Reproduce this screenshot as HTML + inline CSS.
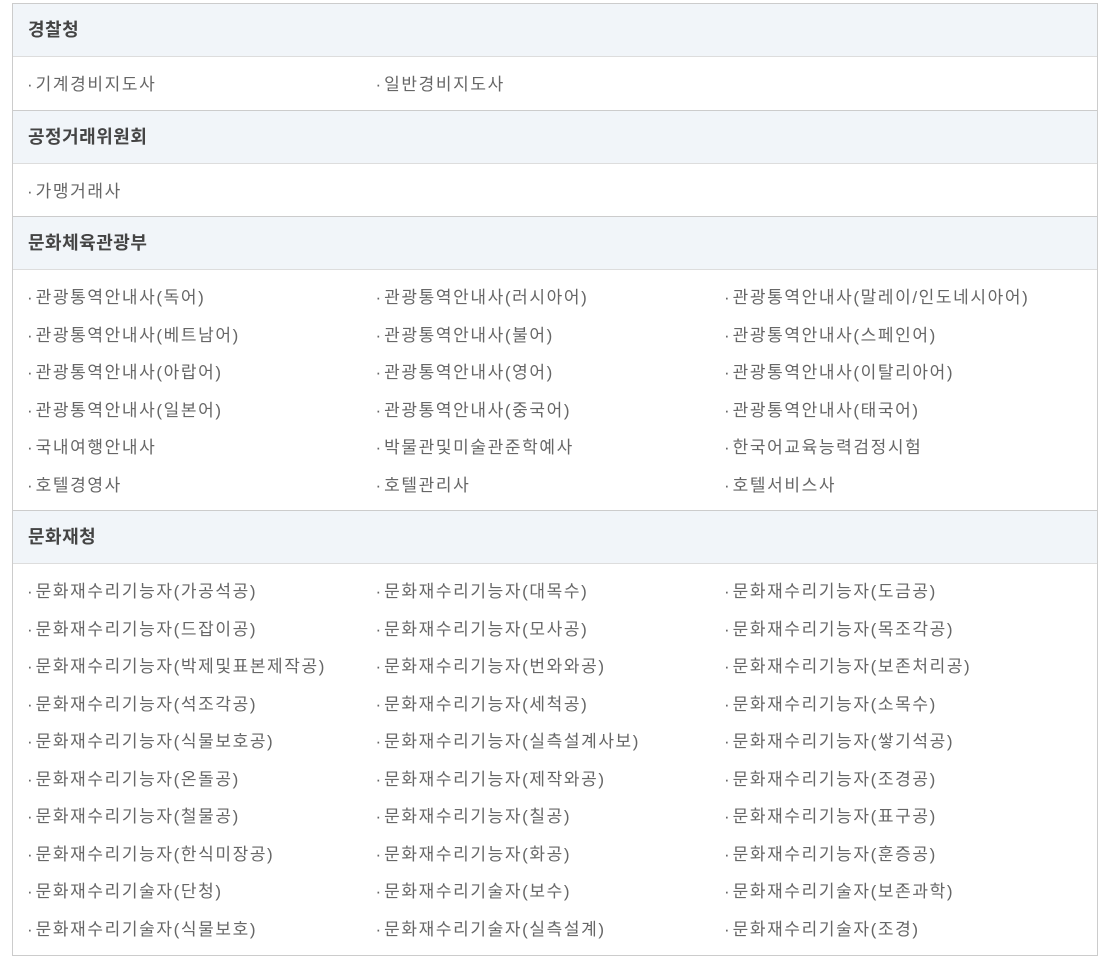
<!DOCTYPE html>
<html><head><meta charset="utf-8"><style>
body{margin:0;background:#fff;font-family:"Liberation Sans","Noto Sans CJK KR",sans-serif;}
.box{position:absolute;left:12px;top:3px;width:1084px;border:1px solid #ccc;}
.h{height:52px;line-height:52px;background:#f1f5f9;border-bottom:1px solid #ddd;padding-left:15px;font-size:18px;font-weight:bold;color:#444;letter-spacing:0.5px;}
.c{padding:9px 0 6px 14px;border-bottom:1px solid #ccc;overflow:hidden;}
.box .c:last-child{border-bottom:none;padding-bottom:7px;}
.c span{float:left;width:348.5px;height:37.5px;line-height:37.5px;font-size:17px;color:#666;white-space:nowrap;letter-spacing:1.6px;}
.c span b{font-weight:normal;letter-spacing:3px;}
</style></head><body>
<div class="box">
<div class="h">경찰청</div>
<div class="c"><span><b>·</b>기계경비지도사</span><span><b>·</b>일반경비지도사</span></div>
<div class="h">공정거래위원회</div>
<div class="c"><span><b>·</b>가맹거래사</span></div>
<div class="h">문화체육관광부</div>
<div class="c">
<span><b>·</b>관광통역안내사(독어)</span><span><b>·</b>관광통역안내사(러시아어)</span><span><b>·</b>관광통역안내사(말레이/인도네시아어)</span>
<span><b>·</b>관광통역안내사(베트남어)</span><span><b>·</b>관광통역안내사(불어)</span><span><b>·</b>관광통역안내사(스페인어)</span>
<span><b>·</b>관광통역안내사(아랍어)</span><span><b>·</b>관광통역안내사(영어)</span><span><b>·</b>관광통역안내사(이탈리아어)</span>
<span><b>·</b>관광통역안내사(일본어)</span><span><b>·</b>관광통역안내사(중국어)</span><span><b>·</b>관광통역안내사(태국어)</span>
<span><b>·</b>국내여행안내사</span><span><b>·</b>박물관및미술관준학예사</span><span><b>·</b>한국어교육능력검정시험</span>
<span><b>·</b>호텔경영사</span><span><b>·</b>호텔관리사</span><span><b>·</b>호텔서비스사</span>
</div>
<div class="h">문화재청</div>
<div class="c">
<span><b>·</b>문화재수리기능자(가공석공)</span><span><b>·</b>문화재수리기능자(대목수)</span><span><b>·</b>문화재수리기능자(도금공)</span>
<span><b>·</b>문화재수리기능자(드잡이공)</span><span><b>·</b>문화재수리기능자(모사공)</span><span><b>·</b>문화재수리기능자(목조각공)</span>
<span><b>·</b>문화재수리기능자(박제및표본제작공)</span><span><b>·</b>문화재수리기능자(번와와공)</span><span><b>·</b>문화재수리기능자(보존처리공)</span>
<span><b>·</b>문화재수리기능자(석조각공)</span><span><b>·</b>문화재수리기능자(세척공)</span><span><b>·</b>문화재수리기능자(소목수)</span>
<span><b>·</b>문화재수리기능자(식물보호공)</span><span><b>·</b>문화재수리기능자(실측설계사보)</span><span><b>·</b>문화재수리기능자(쌓기석공)</span>
<span><b>·</b>문화재수리기능자(온돌공)</span><span><b>·</b>문화재수리기능자(제작와공)</span><span><b>·</b>문화재수리기능자(조경공)</span>
<span><b>·</b>문화재수리기능자(철물공)</span><span><b>·</b>문화재수리기능자(칠공)</span><span><b>·</b>문화재수리기능자(표구공)</span>
<span><b>·</b>문화재수리기능자(한식미장공)</span><span><b>·</b>문화재수리기능자(화공)</span><span><b>·</b>문화재수리기능자(훈증공)</span>
<span><b>·</b>문화재수리기술자(단청)</span><span><b>·</b>문화재수리기술자(보수)</span><span><b>·</b>문화재수리기술자(보존과학)</span>
<span><b>·</b>문화재수리기술자(식물보호)</span><span><b>·</b>문화재수리기술자(실측설계)</span><span><b>·</b>문화재수리기술자(조경)</span>
</div>
</div>
</body></html>
